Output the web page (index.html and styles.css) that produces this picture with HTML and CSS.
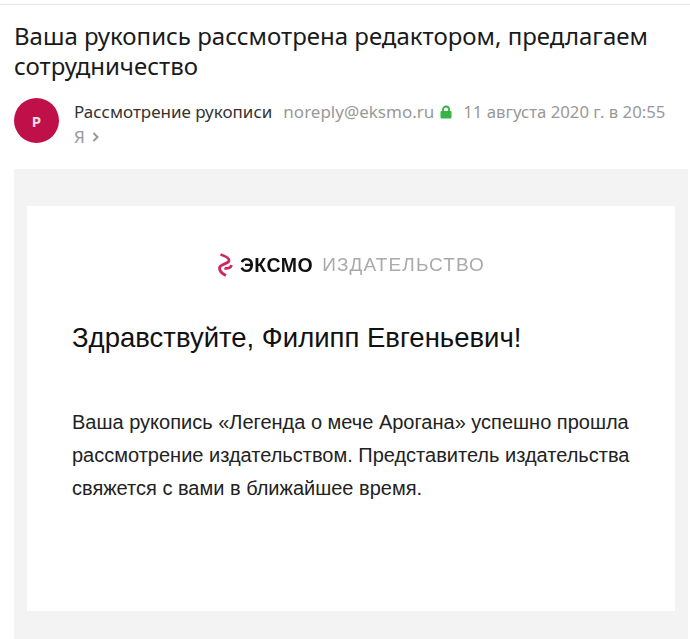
FILE: index.html
```html
<!DOCTYPE html>
<html lang="ru">
<head>
    <meta charset="UTF-8">
    <meta name="viewport" content="width=device-width, initial-scale=1.0">
    <title>Ваша рукопись рассмотрена редактором</title>
    <link rel="stylesheet" href="styles.css">
</head>
<body>
    <div class="message">
        <h1 class="subject">Ваша рукопись рассмотрена редактором, предлагаем сотрудничество</h1>

        <div class="meta">
            <div class="avatar">Р</div>
            <div class="meta-text">
                <div class="meta-line">
                    <span class="sender">Рассмотрение рукописи</span>
                    <span class="address">noreply@eksmo.ru</span>
                    <svg class="lock" width="12" height="14" viewBox="0 0 12 14">
                        <path d="M3 7V4.500a3 3 0 0 1 6 0V7" fill="none" stroke="#34b546" stroke-width="1.800"/>
                        <rect x="0.500" y="6" width="11" height="7.500" rx="1" fill="#34b546"/>
                    </svg>
                    <span class="date">11 августа 2020 г. в 20:55</span>
                </div>
                <div class="meta-line recipient">
                    <span class="to">Я</span>
                    <svg class="chevron" width="8" height="10" viewBox="0 0 8 10">
                        <path d="M1.500 1l4 4-4 4" fill="none" stroke="#999" stroke-width="2"/>
                    </svg>
                </div>
            </div>
        </div>

        <div class="mail-bg">
            <div class="mail-card">
                <div class="logo">
                    <svg class="logo-mark" width="16" height="24" viewBox="0 0 16 24">
                        <path d="M3.500 1.500C8 3 13 5 12 8c-1 3-9 3-9.500 7-.3 4 3.500 6 6.500 7.500" fill="none" stroke="#d0265f" stroke-width="2.800"/>
                        <path d="M14.500 12c-.5 3-4.500 4-7 3" fill="none" stroke="#d0265f" stroke-width="2.800"/>
                    </svg>
                    <span class="logo-brand">ЭКСМО</span>
                    <span class="logo-sub">ИЗДАТЕЛЬСТВО</span>
                </div>
                <h2 class="greeting">Здравствуйте, Филипп Евгеньевич!</h2>
                <p class="mail-text">Ваша рукопись «Легенда о мече Арогана» успешно прошла рассмотрение издательством. Представитель издательства свяжется с вами в ближайшее время.</p>
            </div>
        </div>
    </div>
</body>
</html>
```

FILE: styles.css
```css
html, body {
    height: 100%;
}

body {
    margin: 0;
    background-color: #ffffff;
    font-family: 'Noto Sans', 'Open Sans', sans-serif;
    overflow: hidden;
}

.message {
    margin-top: 4px;
    padding: 16px 2px 0 14px;
    border-top: 1px solid #e6e6e6;
}

.subject {
    margin: 0 0 17px;
    width: 660px;
    color: #1a1a1a;
    font-size: 24px;
    font-weight: 400;
    line-height: 30px;
}

.meta {
    display: flex;
    gap: 15px;
    height: 71px;
}

.avatar {
    display: flex;
    justify-content: center;
    align-items: center;
    flex-shrink: 0;
    width: 45px;
    height: 45px;
    border-radius: 50%;
    background-color: #c0104a;
    color: #f6dbe4;
    font-size: 15px;
    font-weight: 700;
}

.meta-text {
    padding-top: 1px;
}

.meta-line {
    display: flex;
    align-items: center;
    height: 25px;
    font-size: 17px;
    white-space: nowrap;
}

.sender {
    margin-right: 11px;
    color: #333333;
}

.address {
    margin-right: 6px;
    color: #999999;
}

.lock {
    margin-right: 11px;
}

.date {
    color: #999999;
    font-size: 16.750px;
}

.recipient {
    gap: 7px;
}

.to {
    color: #999999;
}

.mail-bg {
    height: 470px;
    padding: 37px 13px 0;
    box-sizing: border-box;
    background-color: #f3f3f3;
}

.mail-card {
    height: 405px;
    padding: 47px 45px 0;
    box-sizing: border-box;
    background-color: #ffffff;
    font-family: 'Liberation Sans', Arial, sans-serif;
}

.logo {
    display: flex;
    justify-content: center;
    align-items: center;
    gap: 7px;
    height: 24px;
    margin-bottom: 45px;
    filter: blur(0.4px);
}

.logo-brand {
    color: #111111;
    font-size: 19.500px;
    font-weight: 700;
    letter-spacing: 0.500px;
}

.logo-sub {
    margin-left: 2px;
    color: #aaaaaa;
    font-size: 19px;
    letter-spacing: 1.100px;
}

.greeting {
    margin: 0 0 52px;
    color: #111111;
    font-size: 27.500px;
    font-weight: 400;
    line-height: 32px;
}

.mail-text {
    margin: 0;
    color: #222222;
    font-size: 20px;
    line-height: 33px;
}
```
